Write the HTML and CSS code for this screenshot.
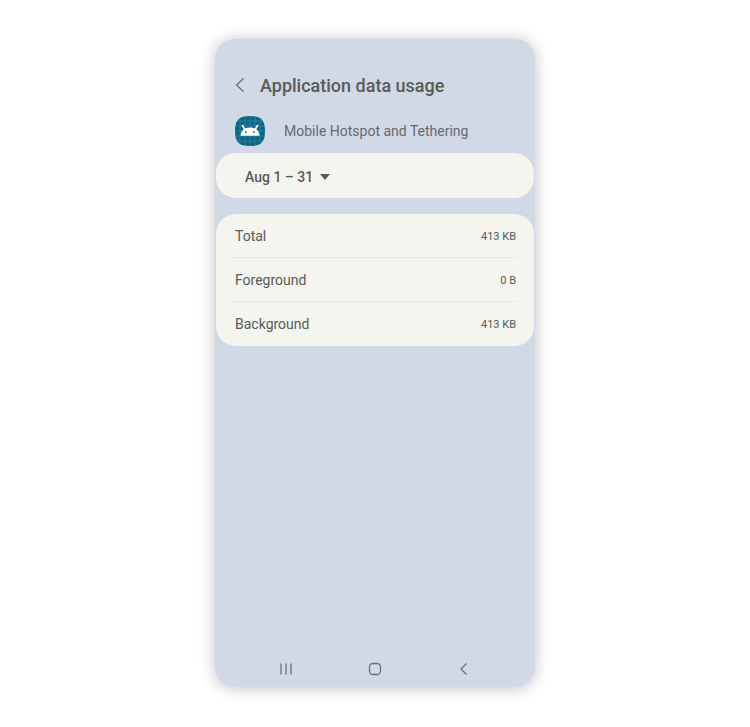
FILE: index.html
```html
<!DOCTYPE html>
<html lang="en">
<head>
    <meta charset="UTF-8">
    <meta name="viewport" content="width=device-width, initial-scale=1.0">
    <title>Application data usage</title>
    <link rel="stylesheet" href="styles.css">
</head>
<body>
    <div class="phone">
        <header class="header">
            <button class="icon-btn" type="button" aria-label="Navigate up">
                <svg width="10" height="16" viewBox="0 0 10 16"><path d="M8.600 1.200 1.600 8l7 6.800"/></svg>
            </button>
            <h1>Application data usage</h1>
        </header>

        <main>
            <div class="app">
                <svg class="app-icon" width="30" height="30" viewBox="0 0 30 30" aria-hidden="true">
                    <path d="M15 0C26 0 30 4 30 15s-4 15-15 15S0 26 0 15 4 0 15 0z" fill="#0b6785"/>
                    <path d="M5 3v24M10 1v28M15 0v30M20 1v28M25 3v24M3 5h24M1 10h28M0 15h30M1 20h28M3 25h24" fill="none" stroke="#3b8ba3" stroke-width=".6"/>
                    <path d="m7.500 9.500 2 3.500M22.500 9.500l-2 3.500" fill="none" stroke="#fff" stroke-width="1.600" stroke-linecap="round"/>
                    <path d="M5.500 19.800c.4-5.200 3.700-8.300 9.500-8.300s9.100 3.100 9.500 8.300z" fill="#fff"/>
                    <circle cx="11" cy="16" r=".9" fill="#3c5963"/>
                    <circle cx="19" cy="16" r=".9" fill="#3c5963"/>
                </svg>
                <span class="app-name">Mobile Hotspot and Tethering</span>
            </div>

            <div class="card period">
                <button class="period-btn" type="button" aria-haspopup="listbox">
                    Aug 1 – 31
                    <svg width="10" height="6" viewBox="0 0 10 6" aria-hidden="true"><path d="M0 0h10L5 6z"/></svg>
                </button>
            </div>

            <dl class="card usage">
                <div class="row">
                    <dt>Total</dt>
                    <dd>413 KB</dd>
                </div>
                <div class="row">
                    <dt>Foreground</dt>
                    <dd>0 B</dd>
                </div>
                <div class="row">
                    <dt>Background</dt>
                    <dd>413 KB</dd>
                </div>
            </dl>
        </main>

        <nav class="navbar">
            <button class="icon-btn" type="button" aria-label="Recents">
                <svg width="14" height="14" viewBox="0 0 14 14"><path d="M2 1.500v11M7 1.500v11M12 1.500v11"/></svg>
            </button>
            <button class="icon-btn" type="button" aria-label="Home">
                <svg width="14" height="14" viewBox="0 0 14 14"><rect x="1.500" y="1.500" width="11" height="11" rx="3.500"/></svg>
            </button>
            <button class="icon-btn" type="button" aria-label="Back">
                <svg width="14" height="14" viewBox="0 0 14 14"><path d="M9.500 1.500 4 7l5.500 5.500"/></svg>
            </button>
        </nav>
    </div>
</body>
</html>
```

FILE: styles.css
```css
* {
    box-sizing: border-box;
}

body {
    display: flex;
    justify-content: center;
    min-height: 100vh;
    margin: 0;
    padding: 39px 16px 40px;
    background-color: #fff;
    color: #5a5a58;
    font-family: Roboto, sans-serif;
    font-size: 14px;
}

button {
    padding: 0;
    border: none;
    background: none;
    color: inherit;
    font: inherit;
    cursor: pointer;
}

.phone {
    display: flex;
    flex-direction: column;
    width: 100%;
    max-width: 320px;
    padding: 32px 1px 7px;
    border-radius: 20px;
    background-color: #d1d8e6;
    box-shadow: 0 1px 16px rgba(0, 0, 0, 0.25);
}

.header {
    display: flex;
    align-items: center;
    gap: 15px;
    height: 28px;
    padding: 0 19px;
}

h1 {
    margin: 0;
    font-size: 18px;
    font-weight: 500;
}

.icon-btn {
    display: flex;
}

.icon-btn svg {
    fill: none;
    stroke: #6b707a;
    stroke-width: 1.3;
}

.app {
    display: flex;
    align-items: center;
    gap: 19px;
    padding: 17px 19px 7px;
}

.app-name {
    color: #666a70;
}

.card {
    margin: 0 0 16px;
    border-radius: 20px;
    background-color: #f4f5ee;
}

.period {
    display: flex;
    height: 45px;
    padding: 2px 29px 0;
}

.period-btn {
    display: flex;
    align-items: center;
    gap: 7px;
    font-weight: 500;
}

.period-btn svg {
    fill: #5a5a58;
}

.usage {
    padding: 0 16px;
}

.row {
    display: flex;
    justify-content: space-between;
    align-items: center;
    height: 44px;
    padding: 0 2px 0 3px;
    border-bottom: 1px solid #e9eae4;
}

.row:last-child {
    border-bottom-color: transparent;
}

dd {
    margin: 0;
    padding-top: 2px;
    font-size: 11px;
}

.navbar {
    display: flex;
    justify-content: space-around;
    margin-top: auto;
    padding: 4px 26px 4px 25px;
}
```
